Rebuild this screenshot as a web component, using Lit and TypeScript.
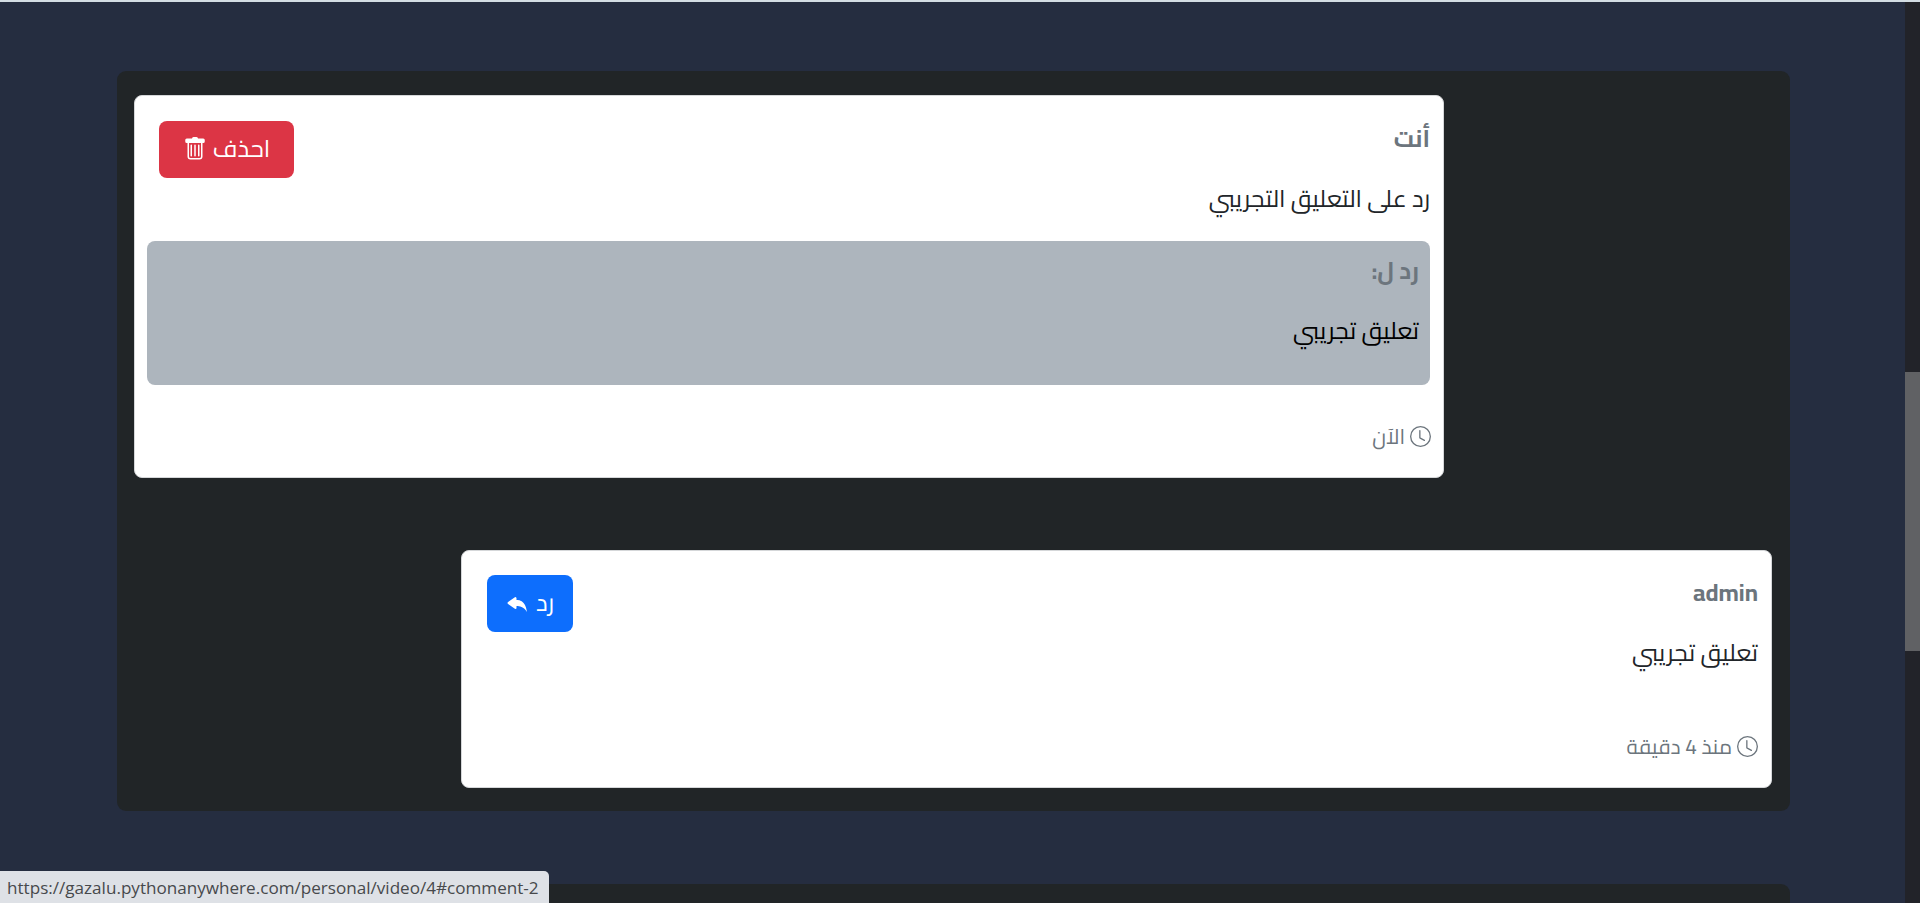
import { LitElement, html, css, svg, nothing } from "lit";
import { customElement, property } from "lit/decorators.js";

const trash = svg`<path d="M2.5 1a1 1 0 0 0-1 1v1a1 1 0 0 0 1 1H3v9a2 2 0 0 0 2 2h6a2 2 0 0 0 2-2V4h.5a1 1 0 0 0 1-1V2a1 1 0 0 0-1-1H10a1 1 0 0 0-1-1H7a1 1 0 0 0-1 1zM4 4h8v9a1 1 0 0 1-1 1H5a1 1 0 0 1-1-1zm1.5 1a.5.5 0 0 0-.5.5v7a.5.5 0 0 0 1 0v-7a.5.5 0 0 0-.5-.5M8 5a.5.5 0 0 0-.5.5v7a.5.5 0 0 0 1 0v-7A.5.5 0 0 0 8 5m2.5 0a.5.5 0 0 0-.5.5v7a.5.5 0 0 0 1 0v-7a.5.5 0 0 0-.5-.5"/>`;
const reply = svg`<path d="M5.921 11.9 1.353 8.62a.72.72 0 0 1 0-1.238L5.921 4.1A.716.716 0 0 1 7 4.719V6c1.5 0 6 0 7 8-2.5-4.5-7-4-7-4v1.281c0 .56-.606.898-1.079.62z"/>`;
const clock = svg`<path d="M8 3.5a.5.5 0 0 0-1 0V9a.5.5 0 0 0 .252.434l3.5 2a.5.5 0 0 0 .496-.868L8 8.71z"/><path d="M8 16A8 8 0 1 0 8 0a8 8 0 0 0 0 16m7-8A7 7 0 1 1 1 8a7 7 0 0 1 14 0"/>`;

@customElement("comment-card")
class CommentCard extends LitElement {
  @property() author = "";
  @property() text = "";
  @property() quote = "";
  @property() time = "";
  @property({ type: Boolean, reflect: true }) own = false;

  static styles = css`
    :host {
      display: flex;
      flex-direction: column;
      box-sizing: border-box;
      width: 1311px;
      height: 238px;
      padding: 23px 13px 0 12px;
      background: #fff;
      border: 1px solid #d5d7d9;
      border-radius: 8px;
      color: #212529;
    }
    :host([own]) { width: 1310px; height: 383px; padding-top: 24px; align-self: flex-end; }
    .head { display: flex; justify-content: space-between; height: 71px; }
    .author { color: #6c757d; font-weight: 700; font-size: 24px; line-height: 38px; white-space: nowrap; }
    .text { font-size: 24px; line-height: 40px; margin-top: -12px; white-space: nowrap; }
    .btn {
      display: flex; align-items: center; justify-content: center; gap: 6px;
      box-sizing: border-box; height: 57px; width: 86px; margin: 1px 0 0 13px; padding: 0 0 2px;
      border: 0; border-radius: 8px; background: #0d6efd; color: #fff;
      font-family: inherit; font-size: 24px;
    }
    :host([own]) .btn { width: 135px; margin-left: 12px; background: #dc3545; }
    .btn svg { width: 24px; height: 24px; fill: currentColor; }
    .quote {
      box-sizing: border-box; height: 144px; margin-top: 22px; padding: 11px 11px 0;
      border-radius: 8px; background: #adb5bd; color: #000;
    }
    .quote .text { margin-top: 21px; }
    .time {
      display: flex; align-items: center; gap: 5px; margin-top: auto; margin-bottom: 24px;
      height: 34px; color: #6c757d; font-size: 20.8px; white-space: nowrap;
    }
    .time svg { width: 21px; height: 21px; fill: currentColor; }
    :host([own]) .time { margin-right: -1px; }
  `;

  render() {
    return html`
      <div class="head">
        <div class="author">${this.author}</div>
        <button class="btn">
          <span>${this.own ? "احذف" : "رد"}</span>
          <svg viewBox="0 0 16 16">${this.own ? trash : reply}</svg>
        </button>
      </div>
      <div class="text">${this.text}</div>
      ${this.quote
        ? html`<div class="quote">
            <div class="author">رد ل:</div>
            <div class="text">${this.quote}</div>
          </div>`
        : nothing}
      <div class="time"><svg viewBox="0 0 16 16">${clock}</svg><span>${this.time}</span></div>
    `;
  }
}

@customElement("app-root")
class AppRoot extends LitElement {
  static styles = css`
    :host {
      display: block; position: relative; box-sizing: border-box; height: 903px; overflow: hidden;
      background: #252d40; border-top: 2px solid #d3dde3;
      font-family: Cairo, "Noto Sans", "DejaVu Sans", sans-serif;
    }
    .page { display: flex; height: 100%; }
    .content { flex: 1; padding: 69px 115px 0 117px; }
    .panel {
      display: flex; flex-direction: column; gap: 72px; box-sizing: border-box;
      height: 740px; padding: 24px 18px 0 17px; border-radius: 9px; background: #212527;
    }
    .panel + .panel { margin-top: 73px; }
    .track { width: 15px; background: #222329; padding-top: 370px; box-sizing: border-box; }
    .thumb { height: 279px; background: #606164; }
    .status {
      position: absolute; left: 0; bottom: 0; box-sizing: border-box; width: 549px; height: 32px;
      padding-left: 7px; border-radius: 0 5px 0 0; background: #dee1e6; color: #47494c;
      font: 17.1px/33px "Open Sans", sans-serif; white-space: nowrap;
    }
  `;

  render() {
    return html`
      <div class="page">
        <div class="content">
          <div class="panel" dir="rtl">
            <comment-card own author="أنت" text="رد على التعليق التجريبي" quote="تعليق تجريبي" time="الآن"></comment-card>
            <comment-card author="admin" text="تعليق تجريبي" time="منذ 4 دقيقة"></comment-card>
          </div>
          <div class="panel"></div>
        </div>
        <div class="track"><div class="thumb"></div></div>
      </div>
      <div class="status">https://gazalu.pythonanywhere.com/personal/video/4#comment-2</div>
    `;
  }
}
